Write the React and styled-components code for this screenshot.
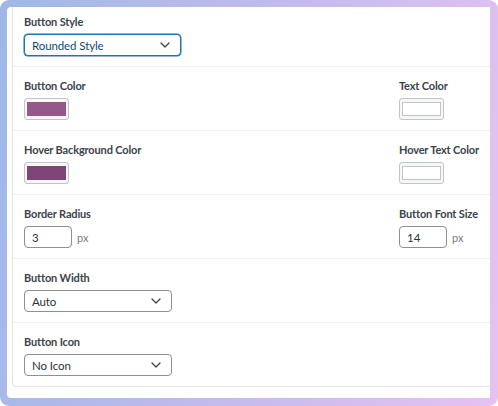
import React from "react";
import styled, { createGlobalStyle } from "styled-components";

const Global = createGlobalStyle`
  html, body { margin: 0; padding: 0; background: #ffffff; }
  body { font-family: Lato, "Noto Sans", sans-serif; }
  * { box-sizing: border-box; }
`;

const Frame = styled.div`
  width: 498px;
  height: 406px;
  border-radius: 9px;
  background: linear-gradient(100deg, #9fb8e9 0%, #c2bbec 50%, #e6c2f3 100%);
  padding: 7px 8px 8px 7px;
`;

const Panel = styled.div`
  width: 100%;
  height: 100%;
  background: #ffffff;
  border-radius: 4px 0 0 4px;
  overflow: hidden;
  padding: 0 0 0 5px;
`;

const Card = styled.div`
  border-left: 1px solid #e2e4e7;
  border-bottom: 1px solid #e2e4e7;
  border-bottom-left-radius: 4px;
  background: #fff;
`;

const Row = styled.div`
  display: grid;
  grid-template-columns: 1fr 91px;
  padding: ${(p) => (p.$first ? "7px" : "11px")} 0 10px 11px;
  border-bottom: ${(p) => (p.$last ? "none" : "1px solid #f0f0f1")};
`;

const Field = styled.div`
  display: flex;
  flex-direction: column;
  gap: 4px;
  align-items: flex-start;
`;

const Label = styled.div`
  font-size: 11px;
  line-height: 16px;
  font-weight: 700;
  letter-spacing: -0.15px;
  color: #3c434a;
  white-space: nowrap;
`;

const SelectBox = styled.div`
  width: ${(p) => p.$w}px;
  height: 22px;
  border: 1px solid ${(p) => (p.$focus ? "#2271b1" : "#8c8f94")};
  box-shadow: ${(p) => (p.$focus ? "0 0 0 0.5px #2271b1" : "none")};
  border-radius: 4px;
  display: flex;
  align-items: center;
  justify-content: space-between;
  padding: 0 10px 0 7px;
  font-size: 11.5px;
  letter-spacing: -0.1px;
  color: ${(p) => (p.$focus ? "#0a4b78" : "#2c3338")};
  background: #fff;
`;

const Swatch = styled.div`
  width: 45px;
  height: 22px;
  border: 1px solid #c3c4c7;
  border-radius: 3px;
  padding: 3px 2px;
  background: #f6f7f7;
  display: flex;
`;

const SwatchFill = styled.div`
  flex: 1;
  background: ${(p) => p.$color};
  border: ${(p) => (p.$color === "#ffffff" ? "1px solid #c3c4c7" : "none")};
`;

const NumberWrap = styled.div`
  display: flex;
  align-items: center;
  gap: 5px;
`;

const NumberBox = styled.div`
  width: 48px;
  height: 22px;
  border: 1px solid #8c8f94;
  border-radius: 4px;
  display: flex;
  align-items: center;
  padding: 0 7px;
  font-size: 11.5px;
  color: #2c3338;
`;

const Unit = styled.span`
  font-size: 11px;
  color: #787c82;
`;

const Chevron = () => (
  <svg width="10" height="6" viewBox="0 0 10 6" fill="none">
    <path d="M1 1l4 4 4-4" stroke="#3c434a" strokeWidth="1.3" strokeLinecap="round" strokeLinejoin="round" />
  </svg>
);

const Select = ({ value, w, focus }) => (
  <SelectBox $w={w} $focus={focus}>
    <span>{value}</span>
    <Chevron />
  </SelectBox>
);

const ColorField = ({ label, color }) => (
  <Field>
    <Label>{label}</Label>
    <Swatch>
      <SwatchFill $color={color} />
    </Swatch>
  </Field>
);

const NumberField = ({ label, value }) => (
  <Field>
    <Label>{label}</Label>
    <NumberWrap>
      <NumberBox>{value}</NumberBox>
      <Unit>px</Unit>
    </NumberWrap>
  </Field>
);

export default function App() {
  return (
    <>
      <Global />
      <Frame>
        <Panel>
          <Card>
            <Row $first>
              <Field>
                <Label>Button Style</Label>
                <Select value="Rounded Style" w={157} focus />
              </Field>
            </Row>
            <Row>
              <ColorField label="Button Color" color="#96588a" />
              <ColorField label="Text Color" color="#ffffff" />
            </Row>
            <Row>
              <ColorField label="Hover Background Color" color="#7f4478" />
              <ColorField label="Hover Text Color" color="#ffffff" />
            </Row>
            <Row>
              <NumberField label="Border Radius" value="3" />
              <NumberField label="Button Font Size" value="14" />
            </Row>
            <Row>
              <Field>
                <Label>Button Width</Label>
                <Select value="Auto" w={148} />
              </Field>
            </Row>
            <Row $last>
              <Field>
                <Label>Button Icon</Label>
                <Select value="No Icon" w={148} />
              </Field>
            </Row>
          </Card>
        </Panel>
      </Frame>
    </>
  );
}
